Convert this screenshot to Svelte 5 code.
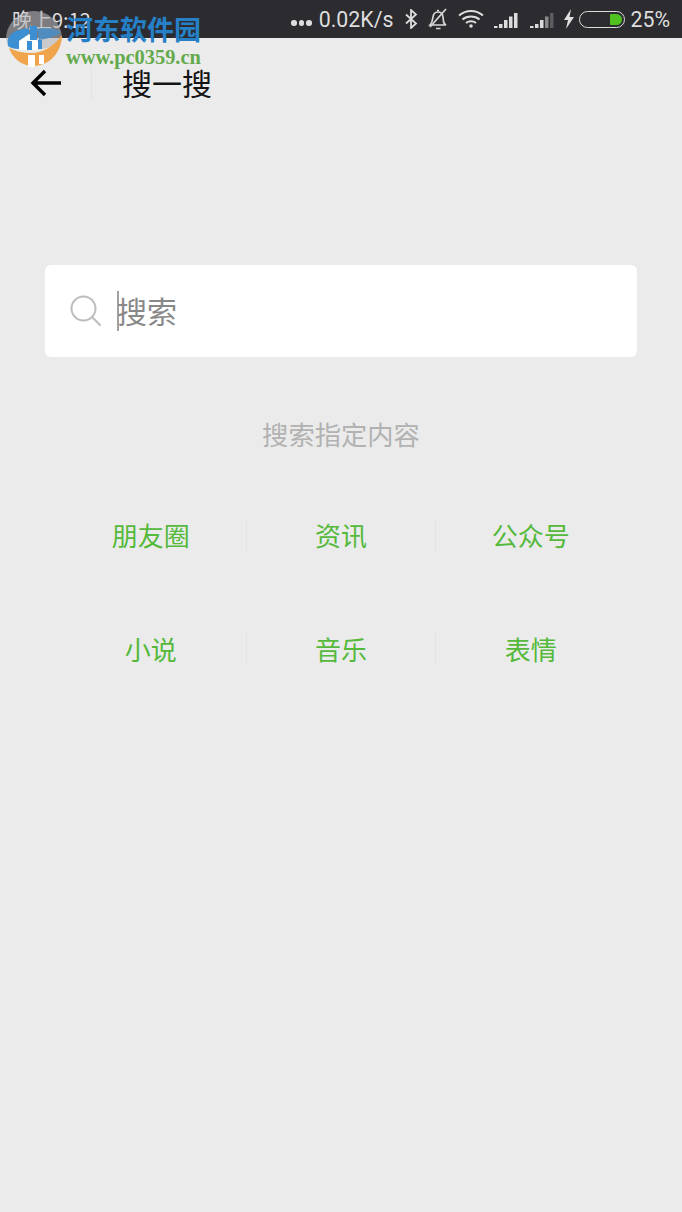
<script>
const rows = [
	['朋友圈', '资讯', '公众号'],
	['小说', '音乐', '表情']
]
</script>

<div class="screen">
	<div class="status">
		<span class="time">晚上9:12</span>
		<div class="status-right">
			<span class="dots"><i></i><i></i><i></i></span>
			<span class="speed">0.02K/s</span>
			<svg class="bt" width="14" height="20" viewBox="0 0 14 20" fill="none" stroke="#dcdcdc" stroke-width="1.8">
				<path d="M2 5.5l10 9-5 4.5V1l5 4.500-10 9" />
			</svg>
			<svg class="bell" width="22" height="24" viewBox="0 0 22 24" fill="none" stroke="#d8d8d8" stroke-width="1.7">
				<path d="M3 18c2-2 2.500-4 2.800-7 .3-3.500 2.200-6 5.200-6s4.600 2 5 5l.6 5c.2 1.300 1 2.300 2.400 3z" />
				<path d="M9 21.500h4.500M10 3.500h2M3 20L19 2" />
			</svg>
			<svg class="wifi" width="26" height="20" viewBox="0 0 26 20" fill="none" stroke="#dedede" stroke-width="2">
				<path d="M1 6.500c7-6 17-6 24 0M4.500 10.500c4.500-4 12.500-4 17 0M8 14c2.800-2.300 7.200-2.300 10 0" />
				<circle cx="13" cy="17" r="1.800" fill="#dedede" stroke="none" />
			</svg>
			<svg class="signal" width="24" height="16" viewBox="0 0 24 16" fill="#dcdcdc">
				<path d="M0 14h3.500v2H0zM5 12h3.500v4H5zM10 8h3.500v8H10zM15 4.500h3.500V16H15zM20 1h3.500v15H20z" />
			</svg>
			<svg class="signal" width="24" height="16" viewBox="0 0 24 16" fill="#dcdcdc">
				<path d="M0 14h3.500v2H0zM5 12h3.500v4H5zM10 8h3.500v8H10z" />
				<path d="M15 4.500h3.500V16H15z" fill="#8a8a8c" />
				<path d="M20 1h3.500v15H20z" fill="#5c5c60" />
			</svg>
			<svg class="bolt" width="12" height="20" viewBox="0 0 12 20" fill="#e0e0e0">
				<path d="M8 0L1 11h4l-2 9 8-12H6.500z" />
			</svg>
			<span class="battery"><span class="charge"></span></span>
			<span class="percent">25%</span>
		</div>
	</div>

	<div class="nav">
		<button class="back" type="button" aria-label="返回">
			<svg width="32" height="28" viewBox="0 0 32 28" fill="none" stroke="#000" stroke-width="3.400">
				<path d="M31 14H3M15 2L3 14l12 12" />
			</svg>
		</button>
		<span class="nav-line"></span>
		<span class="nav-title">搜一搜</span>
	</div>

	<div class="search">
		<svg width="32" height="32" viewBox="0 0 32 32" fill="none" stroke="#bdbdbd" stroke-width="2">
			<circle cx="13.500" cy="13.500" r="12" />
			<path d="M22.500 22.500l8 8" />
		</svg>
		<span class="caret"></span>
		<span class="placeholder">搜索</span>
	</div>

	<p class="hint">搜索指定内容</p>

	<div class="grid">
		{#each rows as row}
			<div class="row">
				{#each row as label}
					<span class="cell">{label}</span>
				{/each}
			</div>
		{/each}
	</div>

	<div class="watermark">
		<svg width="58" height="58" viewBox="0 0 58 58">
			<path d="M1 30A28 28 0 0 1 57 28C52 36 40 40 28 40 16 40 6 36 1 30z" fill="#b4b4b8" opacity=".6" />
			<path d="M4 38C10 41 18 43 26 43 38 43 49 36 57 25 57 42 44 56 29 56 17 56 8 49 4 38z" fill="#f0a54c" />
			<path d="M23 45h7v12h-7zM34 45h5v9h-5z" fill="#fff" />
			<path d="M3 36C1 28 6 22 14 20 18 19 22 18 24 18L24 24 14 31V39C9 39 5 38 3 36z" fill="#3b8fd2" />
			<path d="M14 31l10-7 9 7v9H14z" fill="#fff" />
			<path d="M22 31h5v9h-5z" fill="#3b8fd2" />
			<path d="M25 16h7v14h-7z" fill="#3b8fd2" />
			<path d="M32 19C40 17 49 18 56 22 50 27 42 29 34 30z" fill="#4b8fc4" opacity=".9" />
			<path d="M33 30h4v9h-4z" fill="#3b8fd2" />
		</svg>
		<div class="wm-text">
			<span class="wm-name">河东软件园</span>
			<span class="wm-url">www.pc0359.cn</span>
		</div>
	</div>
</div>

<style>
:global(body) {
	background: #ebebeb;
}

.screen {
	position: relative;
	width: 682px;
	height: 1212px;
	overflow: hidden;
	background: #ebebeb;
	font-family: "Noto Sans CJK SC", "Liberation Sans", sans-serif;
}

.status {
	display: flex;
	justify-content: space-between;
	align-items: center;
	height: 38px;
	padding: 0 12px;
	box-sizing: border-box;
	background: #2c2c30;
	color: #dedede;
	font-size: 20px;
}

.status-right {
	display: flex;
	align-items: center;
}

.dots {
	display: flex;
	gap: 2px;
	margin-top: 8px;
	margin-right: 7px;

	i {
		width: 5.500px;
		height: 5.500px;
		border-radius: 50%;
		background: #dedede;
	}
}

.speed,
.percent {
	font-family: "Roboto", "Liberation Sans", sans-serif;
	font-size: 21.300px;
}

.bt {
	margin-left: 11px;
}

.bell {
	margin-left: 9px;
}

.wifi {
	margin-left: 9px;
}

.signal {
	margin-left: 10px;
	margin-top: 2px;
}

.signal + .signal {
	margin-left: 12px;
}

.bolt {
	margin-left: 9px;
}

.battery {
	display: flex;
	justify-content: flex-end;
	width: 46px;
	height: 17px;
	margin-left: 4px;
	padding: 2px;
	box-sizing: border-box;
	border: 1.500px solid #dcdcdc;
	border-radius: 9px;
}

.charge {
	width: 12px;
	height: 100%;
	background: #4fc21f;
	border-radius: 1px 6px 6px 1px;
}

.percent {
	margin-left: 5px;
}

.nav {
	display: flex;
	align-items: center;
	height: 92px;
	margin-top: -1px;
}

.back {
	display: flex;
	width: 91px;
	padding: 0 0 0 30px;
	border: 0;
	background: none;
}

.nav-line {
	width: 1px;
	height: 34px;
	background: #e2e2e2;
}

.nav-title {
	margin-left: 30px;
	padding-bottom: 3px;
	color: #141414;
	font-size: 30px;
	line-height: 40px;
}

.search {
	display: flex;
	align-items: center;
	height: 92px;
	margin: 136px 45px 0 45px;
	padding-left: 25px;
	background: #fff;
	border-radius: 6px;
}

.caret {
	width: 2px;
	height: 40px;
	margin-left: 15px;
	background: #a0a0a0;
}

.placeholder {
	margin-left: -2px;
	padding-bottom: 2px;
	color: #888;
	font-size: 30px;
	line-height: 40px;
}

.hint {
	margin: 59px 0 0;
	color: #b2b2b2;
	font-size: 26.300px;
	line-height: 36px;
	text-align: center;
}

.grid {
	display: flex;
	flex-direction: column;
	gap: 82px;
	margin: 67px 57px 0 56px;
}

.row {
	display: grid;
	grid-template-columns: repeat(3, 1fr);
}

.cell {
	height: 32px;
	color: #55b93b;
	font-size: 26px;
	line-height: 32px;
	text-align: center;

	& + .cell {
		border-left: 1px solid #e3e3e3;
	}
}

.watermark {
	position: absolute;
	top: 10px;
	left: 5px;
	display: flex;
	gap: 3px;
}

.wm-text {
	display: flex;
	flex-direction: column;
	font-family: "Liberation Serif", "Noto Sans CJK SC", serif;
	font-weight: 700;
}

.wm-name {
	margin-top: 1px;
	color: #2580c8;
	font-family: "Noto Sans CJK SC", serif;
	font-size: 27px;
	line-height: 36px;
}

.wm-url {
	color: #64aa4c;
	font-size: 20.400px;
	line-height: 20px;
}
</style>
